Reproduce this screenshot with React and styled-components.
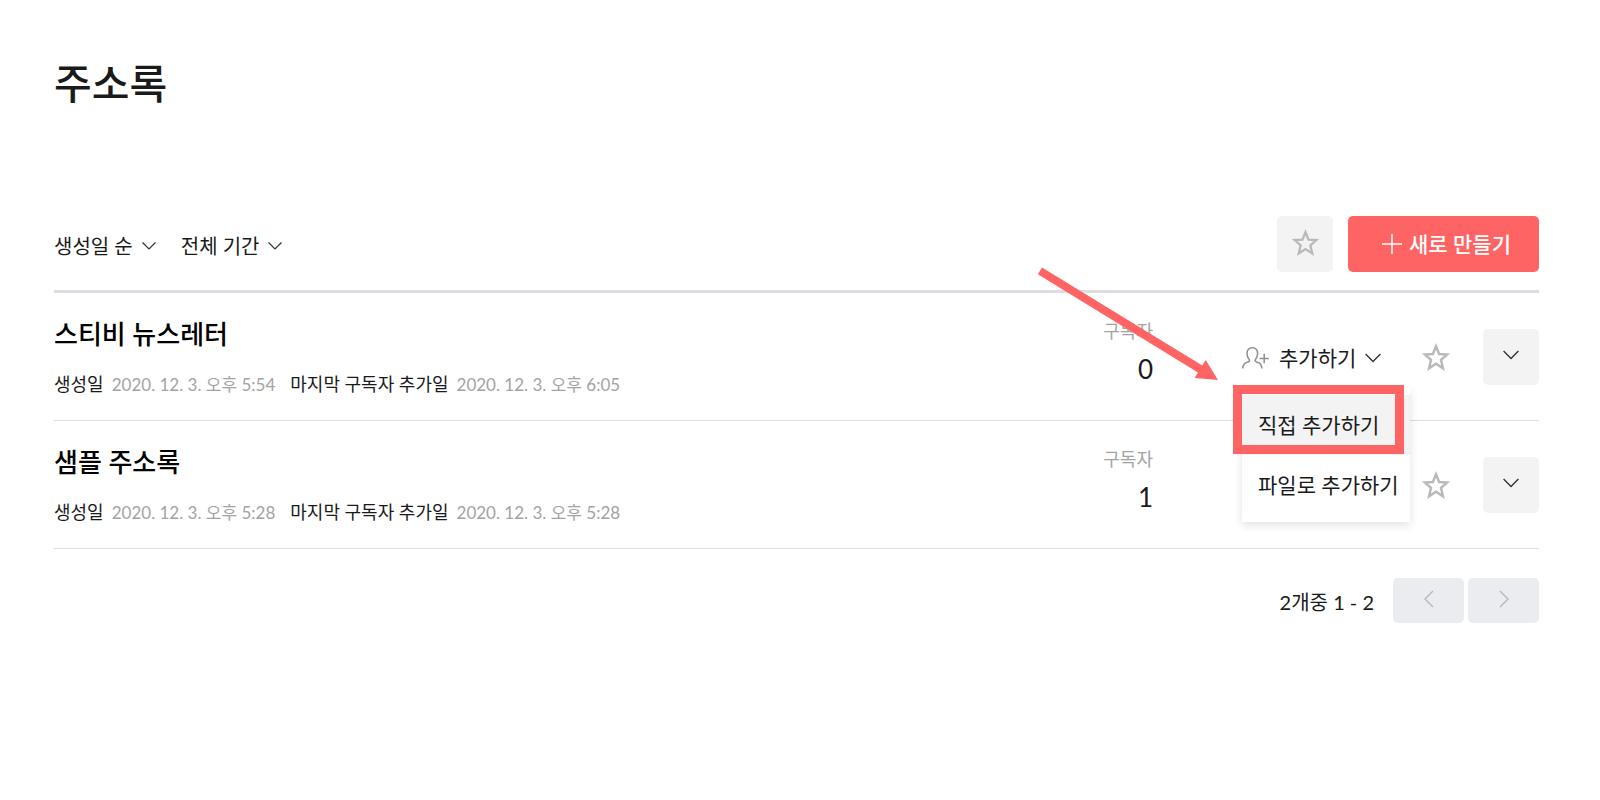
import React from "react";
import styled, { createGlobalStyle, css } from "styled-components";

const coral = "#ff6464";

const GlobalStyle = createGlobalStyle`
  *, *::before, *::after { box-sizing: border-box; }
  body {
    margin: 0;
    background: #fff;
    color: #1a1a1a;
    font-family: Lato, "Noto Sans CJK KR", sans-serif;
    font-size: 20px;
    line-height: 28px;
  }
  button, select {
    font: inherit;
    color: inherit;
    margin: 0;
    padding: 0;
    border: 0;
    background: none;
    cursor: pointer;
  }
  svg { display: block; flex: none; }
`;

const Page = styled.main`
  padding: 56px 61px 80px 54px;
`;

const Title = styled.h1`
  margin: 0 0 104px;
  font-size: 41px;
  line-height: 56px;
  font-weight: 500;
`;

const Toolbar = styled.div`
  display: flex;
  align-items: center;
  padding-bottom: 18px;
  border-bottom: 3px solid #dcdce3;
`;

const Filters = styled.div`
  display: flex;
  flex: 1;
  gap: 25px;
  padding-top: 4px;
`;

const Filter = styled.label`
  display: flex;
  align-items: center;
  gap: 9px;
`;

const FilterSelect = styled.select`
  appearance: none;
  field-sizing: content;
`;

const SquareButton = styled.button`
  display: grid;
  place-items: center;
  width: 56px;
  height: 56px;
  padding-bottom: 4px;
  border-radius: 5px;
  background: #f3f3f3;
`;

const CreateButton = styled.button`
  display: flex;
  align-items: center;
  justify-content: center;
  gap: 7px;
  width: 191px;
  height: 56px;
  margin-left: 15px;
  padding-left: 6px;
  border-radius: 5px;
  background: ${coral};
  color: #fff;
  font-size: 21px;
  font-weight: 500;
`;

const List = styled.ul`
  margin: 0;
  padding: 0;
  list-style: none;
`;

const Row = styled.li`
  display: flex;
  height: 128px;
  border-bottom: 1px solid #dcdce3;
`;

const Info = styled.div`
  flex: 1;
  padding-top: 25px;
`;

const Name = styled.h2`
  margin: 0 0 22px;
  font-size: 26px;
  line-height: 32px;
  font-weight: 500;
  color: #000;
`;

const Meta = styled.dl`
  display: flex;
  align-items: baseline;
  margin: 0;
  line-height: 24px;
`;

const MetaTerm = styled.dt`
  margin-right: 8px;
  font-size: 18px;
`;

const MetaValue = styled.dd`
  margin: 0 15px 0 0;
  font-size: 17px;
  color: #a3a3a3;
`;

const Subscribers = styled.div`
  padding-top: 26px;
  text-align: right;
`;

const SubscribersLabel = styled.div`
  margin-bottom: 10px;
  font-size: 18px;
  line-height: 24px;
  color: #a3a3a3;
`;

const SubscribersCount = styled.div`
  font-size: 26px;
  line-height: 32px;
`;

const Actions = styled.div`
  display: flex;
  align-items: center;
  padding-left: 89px;
`;

const AddSlot = styled.div`
  position: relative;
  width: 140px;
  margin-right: 39px;
`;

const AddButton = styled.button`
  display: flex;
  align-items: center;
  gap: 9px;
  padding-top: 2px;
  font-size: 21px;
`;

const StarButton = styled.button`
  margin-right: 32px;
`;

const Menu = styled.div`
  position: absolute;
  z-index: 1;
  top: 46px;
  left: 0;
  width: 168px;
  padding: 7px 0;
  background: #fff;
  box-shadow: 0 3px 9px rgba(0, 0, 0, 0.12);
`;

const MenuItem = styled.button`
  display: block;
  width: 100%;
  height: 60px;
  padding-left: 16px;
  font-size: 21px;
  text-align: left;
  white-space: nowrap;
  ${(p) => p.$active && css`background: #f3f3f3;`}
`;

const Highlight = styled.div`
  position: absolute;
  top: -3px;
  left: -9px;
  width: 171px;
  height: 69px;
  border: 9px solid ${coral};
  pointer-events: none;
`;

const Arrow = styled.svg`
  position: absolute;
  z-index: 2;
  top: -75px;
  left: -205px;
  pointer-events: none;
`;

const Pagination = styled.nav`
  display: flex;
  align-items: center;
  justify-content: flex-end;
  gap: 4px;
  padding-top: 29px;
`;

const PageRange = styled.span`
  margin-right: 15px;
  padding-top: 2px;
`;

const PageButton = styled.button`
  display: grid;
  place-items: center;
  width: 71px;
  height: 45px;
  padding-bottom: 4px;
  border-radius: 5px;
  background: #ebecf0;
`;

const Chevron = ({ width = 16, color = "#333" }) => (
  <svg width={width} height="10" viewBox="0 0 16 10" fill="none" stroke={color} strokeWidth="1.4" aria-hidden="true">
    <path d="M.6 1 8 8.400 15.400 1" />
  </svg>
);

const PageChevron = ({ next }) => (
  <svg width="10" height="18" viewBox="0 0 10 18" fill="none" stroke="#b5b5ba" strokeWidth="1.3" aria-hidden="true">
    <path d={next ? "M1 1l8 8-8 8" : "M9 1L1 9l8 8"} />
  </svg>
);

const Star = ({ size = 30 }) => (
  <svg width={size} height={size} viewBox="0 0 30 30" fill="none" stroke="#b9b9b9" strokeWidth="2.4" aria-hidden="true">
    <path d="M15 4.200 18.100 12 26.200 12.500 20 17.900 22 26.300 15 21.800 8 26.300 10 17.900 3.800 12.500 11.900 12z" />
  </svg>
);

const Plus = () => (
  <svg width="20" height="20" viewBox="0 0 20 20" fill="none" stroke="#fff" strokeWidth="1.5" aria-hidden="true">
    <path d="M10 0v20M0 10h20" />
  </svg>
);

const PersonPlus = () => (
  <svg width="28" height="22" viewBox="0 0 28 22" fill="none" stroke="#8e8e8e" strokeWidth="1.5" aria-hidden="true">
    <path d="M.8 21.500c0-4.500 2-5.500 5.200-6.500 1.700-.6 2-1.600.9-2.900C5.600 10.500 5 8.700 5 6.600 5 3 7.100.8 10.300.8s5.300 2.200 5.300 5.800c0 2.100-.6 3.900-1.900 5.500-1.100 1.300-.8 2.300.9 2.900 3.200 1 5.200 2 5.200 6.500M17.500 11.500h9.300M22.200 6.800v9.400" />
  </svg>
);

const lists = [
  { name: "스티비 뉴스레터", created: "2020. 12. 3. 오후 5:54", added: "2020. 12. 3. 오후 6:05", count: 0, open: true },
  { name: "샘플 주소록", created: "2020. 12. 3. 오후 5:28", added: "2020. 12. 3. 오후 5:28", count: 1 },
];

const AddMenu = () => (
  <>
    <AddButton aria-haspopup="menu" aria-expanded="true">
      <PersonPlus />
      추가하기
      <Chevron />
    </AddButton>
    <Menu role="menu">
      <MenuItem role="menuitem" $active>직접 추가하기</MenuItem>
      <MenuItem role="menuitem">파일로 추가하기</MenuItem>
      <Highlight />
    </Menu>
    <Arrow width="182" height="114" viewBox="0 0 182 114" fill={coral} aria-hidden="true">
      <path d="M5 .4 165.300 98.600 168.700 93 181 113 157.700 111 161 105.600.8 7.200z" />
    </Arrow>
  </>
);

export default function App() {
  return (
    <>
      <GlobalStyle />
      <Page>
        <Title>주소록</Title>
        <Toolbar>
          <Filters>
            <Filter>
              <FilterSelect aria-label="생성일 순">
                <option>생성일 순</option>
              </FilterSelect>
              <Chevron width={14} />
            </Filter>
            <Filter>
              <FilterSelect aria-label="전체 기간">
                <option>전체 기간</option>
              </FilterSelect>
              <Chevron width={14} />
            </Filter>
          </Filters>
          <SquareButton aria-label="즐겨찾기만 보기">
            <Star size={29} />
          </SquareButton>
          <CreateButton>
            <Plus />
            새로 만들기
          </CreateButton>
        </Toolbar>
        <List>
          {lists.map((list) => (
            <Row key={list.name}>
              <Info>
                <Name>{list.name}</Name>
                <Meta>
                  <MetaTerm>생성일</MetaTerm>
                  <MetaValue>{list.created}</MetaValue>
                  <MetaTerm>마지막 구독자 추가일</MetaTerm>
                  <MetaValue>{list.added}</MetaValue>
                </Meta>
              </Info>
              <Subscribers>
                <SubscribersLabel>구독자</SubscribersLabel>
                <SubscribersCount>{list.count}</SubscribersCount>
              </Subscribers>
              <Actions>
                <AddSlot>{list.open && <AddMenu />}</AddSlot>
                <StarButton aria-label="즐겨찾기">
                  <Star />
                </StarButton>
                <SquareButton aria-label="더 보기">
                  <Chevron />
                </SquareButton>
              </Actions>
            </Row>
          ))}
        </List>
        <Pagination aria-label="페이지">
          <PageRange>2개중 1 - 2</PageRange>
          <PageButton aria-label="이전">
            <PageChevron />
          </PageButton>
          <PageButton aria-label="다음">
            <PageChevron next />
          </PageButton>
        </Pagination>
      </Page>
    </>
  );
}
